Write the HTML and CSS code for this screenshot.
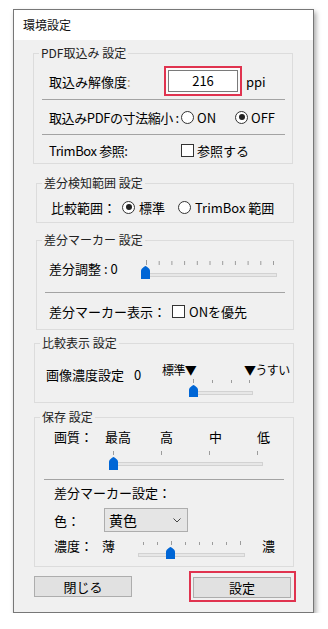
FILE: index.html
```html
<!DOCTYPE html>
<html lang="ja">
<head>
    <meta charset="UTF-8">
    <meta name="viewport" content="width=device-width, initial-scale=1.0">
    <title>環境設定</title>
    <link rel="stylesheet" href="styles.css">
</head>
<body>
<div class="window">
    <div class="titlebar">環境設定</div>

    <div class="content">
        <!-- PDF取込み -->
        <div class="group grp-pdf">
            <span class="caption">PDF取込み 設定</span>
            <div class="row row-res">
                <span class="lbl-res">取込み解像度<span class="colon">:</span></span>
                <span class="ring"><span class="textbox">216</span></span>
                <span class="unit">ppi</span>
            </div>
            <div class="sep sep-pdf"></div>
            <div class="row row-shrink">
                <span class="lbl-shrink">取込みPDFの寸法縮小 :</span>
                <span class="opt opt-on"><span class="radio"></span>ON</span>
                <span class="opt"><span class="radio checked"></span>OFF</span>
            </div>
            <div class="sep sep-pdf"></div>
            <div class="row row-trim">
                <span class="lbl-shrink">TrimBox 参照:</span>
                <span class="opt"><span class="check"></span>参照する</span>
            </div>
        </div>

        <!-- 差分検知範囲 -->
        <div class="group grp-range">
            <span class="caption">差分検知範囲 設定</span>
            <div class="row row-range">
                <span class="lbl-range">比較範囲：</span>
                <span class="opt opt-std"><span class="radio checked"></span>標準</span>
                <span class="opt"><span class="radio"></span>TrimBox 範囲</span>
            </div>
        </div>

        <!-- 差分マーカー -->
        <div class="group grp-marker">
            <span class="caption">差分マーカー 設定</span>
            <div class="row row-adj">
                <span class="lbl-adj">差分調整 : 0</span>
                <svg class="slider" width="137" height="21" viewBox="0 0 137 21">
                    <g stroke="#9c9c9c" stroke-width="1">
                        <line x1="5.5" y1="1" x2="5.5" y2="6"/>
                        <line x1="18.2" y1="2" x2="18.2" y2="6"/>
                        <line x1="30.9" y1="2" x2="30.9" y2="6"/>
                        <line x1="43.6" y1="2" x2="43.6" y2="6"/>
                        <line x1="56.3" y1="2" x2="56.3" y2="6"/>
                        <line x1="69" y1="2" x2="69" y2="6"/>
                        <line x1="81.7" y1="2" x2="81.7" y2="6"/>
                        <line x1="94.4" y1="2" x2="94.4" y2="6"/>
                        <line x1="107.1" y1="2" x2="107.1" y2="6"/>
                        <line x1="119.8" y1="2" x2="119.8" y2="6"/>
                        <line x1="132.5" y1="2" x2="132.5" y2="6"/>
                    </g>
                    <rect x="1.5" y="14.5" width="134" height="3" fill="#e7e7e7" stroke="#d2d2d2"/>
                    <path d="M0 20V11.5C0 10 3 7.5 4.5 7C6 7.5 9 10 9 11.5V20Z" fill="#0066d6"/>
                </svg>
            </div>
            <div class="sep sep-marker"></div>
            <div class="row row-mark">
                <span class="lbl-mark">差分マーカー表示：</span>
                <span class="opt opt-wide"><span class="check"></span>ONを優先</span>
            </div>
        </div>

        <!-- 比較表示 -->
        <div class="group grp-view">
            <span class="caption">比較表示 設定</span>
            <div class="row row-view">
                <span class="lbl-dens">画像濃度設定</span>
                <span class="zero">0</span>
                <div class="dens-slider">
                    <div class="marks"><span class="mark-std">標準▼</span><span>▼うすい</span></div>
                    <svg class="slider slider-b" width="66" height="20" viewBox="0 0 66 20">
                        <g stroke="#9c9c9c" stroke-width="1">
                            <line x1="4.5" y1="1" x2="4.5" y2="5"/>
                            <line x1="23.5" y1="2" x2="23.5" y2="5"/>
                            <line x1="42.5" y1="2" x2="42.5" y2="5"/>
                            <line x1="60.5" y1="2" x2="60.5" y2="5"/>
                        </g>
                        <rect x="1.5" y="13.5" width="62" height="3" fill="#e7e7e7" stroke="#d2d2d2"/>
                        <path d="M0 19V11.5C0 10 3 7.5 4.5 7C6 7.5 9 10 9 11.5V19Z" fill="#0066d6"/>
                    </svg>
                </div>
            </div>
        </div>

        <!-- 保存 -->
        <div class="group grp-save">
            <span class="caption">保存 設定</span>
            <div class="row row-quality">
                <span class="q-lbl">画質：</span>
                <span class="q-best">最高</span>
                <span class="q-high">高</span>
                <span class="q-mid">中</span>
                <span>低</span>
            </div>
            <svg class="slider slider-c" width="155" height="21" viewBox="0 0 155 21">
                <g stroke="#9c9c9c" stroke-width="1">
                    <line x1="4.5" y1="1" x2="4.5" y2="5"/>
                    <line x1="52.5" y1="1" x2="52.5" y2="5"/>
                    <line x1="100.5" y1="1" x2="100.5" y2="5"/>
                    <line x1="148.5" y1="1" x2="148.5" y2="5"/>
                </g>
                <rect x="0.5" y="12.5" width="153" height="3" fill="#e7e7e7" stroke="#d2d2d2"/>
                <path d="M0 20V11.5C0 10 3 7.5 4.5 7C6 7.5 9 10 9 11.5V20Z" fill="#0066d6"/>
            </svg>
            <div class="sep sep-save"></div>
            <div class="sub-title">差分マーカー設定：</div>
            <div class="row row-color">
                <span class="lbl-color">色：</span>
                <span class="select">黄色
                    <svg class="chev" width="8" height="5" viewBox="0 0 8 5"><path d="M0.5 0.5L4 4L7.5 0.5" fill="none" stroke="#444" stroke-width="1"/></svg>
                </span>
            </div>
            <div class="row row-dens">
                <span class="lbl-dens2">濃度：</span>
                <span class="lbl-thin">薄</span>
                <svg class="slider slider-d" width="108" height="19" viewBox="0 0 108 19">
                    <g stroke="#9c9c9c" stroke-width="1">
                        <line x1="5.5" y1="1" x2="5.5" y2="4"/>
                        <line x1="19.5" y1="1" x2="19.5" y2="4"/>
                        <line x1="33.5" y1="0" x2="33.5" y2="4"/>
                        <line x1="47.5" y1="1" x2="47.5" y2="4"/>
                        <line x1="61.5" y1="1" x2="61.5" y2="4"/>
                        <line x1="74.5" y1="1" x2="74.5" y2="4"/>
                        <line x1="88.5" y1="1" x2="88.5" y2="4"/>
                        <line x1="102.5" y1="0" x2="102.5" y2="4"/>
                    </g>
                    <rect x="0.5" y="12.5" width="106" height="3" fill="#e7e7e7" stroke="#d2d2d2"/>
                    <path d="M28 18V10.5C28 9 31 6.5 32.5 6C34 6.5 37 9 37 10.5V18Z" fill="#0066d6"/>
                </svg>
                <span class="lbl-thick">濃</span>
            </div>
        </div>

        <div class="buttons">
            <span class="btn">閉じる</span>
            <span class="btn-ring"><span class="btn">設定</span></span>
        </div>
    </div>
</div>
</body>
</html>
```

FILE: styles.css
```css
* {
    margin: 0;
    padding: 0;
    box-sizing: border-box;
}

body {
    background-color: #fff;
    font-family: "Noto Sans CJK JP", "Noto Sans", sans-serif;
    font-size: 13px;
    color: #000;
}

.window {
    width: 301px;
    margin: 9px 0 0 13px;
    border: 1px solid #777;
    background-color: #f0f0f0;
    box-shadow: 2px 3px 5px rgba(0, 0, 0, 0.35);
}

.titlebar {
    height: 30px;
    line-height: 30px;
    padding-left: 9px;
    background-color: #fff;
    font-size: 12px;
    color: #111;
}

.content {
    padding: 0 19px 10px 20px;
}

.group {
    position: relative;
    border: 1px solid #dcdcdc;
}

.caption {
    position: absolute;
    top: -8px;
    left: 5px;
    padding: 0 2px;
    background-color: #f0f0f0;
    font-size: 12px;
    line-height: 14px;
    color: #222;
    white-space: nowrap;
}

.row {
    display: flex;
    align-items: center;
    white-space: nowrap;
}

.row > span {
    flex-shrink: 0;
}

.sep {
    height: 1px;
    background-color: #a3a3a3;
}

.opt {
    display: flex;
    align-items: center;
    gap: 3px;
}

.radio {
    width: 13px;
    height: 13px;
    border: 1px solid #333;
    border-radius: 50%;
    background-color: #fff;
    display: inline-flex;
    align-items: center;
    justify-content: center;
}

.radio.checked::after {
    content: "";
    width: 6px;
    height: 6px;
    border-radius: 50%;
    background-color: #222;
}

.check {
    width: 13px;
    height: 13px;
    border: 1px solid #333;
    background-color: #fff;
}

.slider {
    display: block;
    flex-shrink: 0;
}

/* PDF取込み */
.grp-pdf {
    margin: 13px 1px 0 -1px;
}

.row-res {
    padding: 12px 0 3px 15px;
}

.lbl-res {
    width: 115px;
}

.colon {
    color: #b09060;
}

.ring {
    border: 2px solid #e0334f;
    padding: 2px;
    background-color: #fafafa;
}

.textbox {
    display: block;
    width: 70px;
    height: 22px;
    line-height: 20px;
    border: 1px solid #7a7a7a;
    background-color: #fff;
    text-align: center;
}

.unit {
    margin-left: 4px;
}

.sep-pdf {
    margin: 0 7px 0 8px;
}

.row-shrink {
    height: 34px;
    padding-left: 15px;
}

.lbl-shrink {
    width: 132px;
    letter-spacing: -0.4px;
}

.opt-on {
    width: 54px;
}

.row-trim {
    height: 28px;
    padding: 2px 0 0 15px;
}

/* 差分検知範囲 */
.grp-range {
    margin: 19px 0 0 2px;
}

.row-range {
    padding: 11px 0 3px 14px;
    height: 38px;
}

.lbl-range {
    width: 71px;
}

.opt-std {
    width: 56px;
}

.grp-range .opt {
    gap: 4px;
}

/* 差分マーカー */
.grp-marker {
    margin: 17px 0 0 2px;
}

.row-adj {
    height: 51px;
    padding: 15px 0 12px 12px;
}

.lbl-adj {
    width: 92px;
}

.row-adj .slider {
    align-self: flex-end;
}

.sep-marker {
    margin: 0 8px;
}

.row-mark {
    height: 36px;
    padding-left: 12px;
}

.lbl-mark {
    width: 123px;
}

.opt-wide {
    gap: 4px;
}

/* 比較表示 */
.grp-view {
    margin-top: 13px;
}

.row-view {
    align-items: flex-start;
    padding: 18px 0 4px 11px;
    line-height: 16px;
}

.lbl-dens {
    width: 88px;
    margin-top: 5px;
}

.zero {
    width: 28px;
    margin-top: 5px;
}

.dens-slider {
    flex-shrink: 0;
}

.marks {
    display: flex;
    white-space: nowrap;
    font-size: 12px;
    letter-spacing: -0.6px;
}

.mark-std {
    width: 82px;
}

.slider-b {
    margin-left: 27px;
}

/* 保存 */
.grp-save {
    margin-top: 14px;
}

.row-quality {
    padding: 11px 0 0 19px;
    line-height: 16px;
}

.q-lbl {
    width: 51px;
}

.q-best {
    width: 55px;
}

.q-high {
    width: 49px;
}

.q-mid {
    width: 48px;
}

.slider-c {
    margin: 5px 0 0 74px;
}

.sep-save {
    margin: 8px 9px 0 9px;
}

.sub-title {
    margin-top: 5px;
    padding-left: 19px;
    line-height: 16px;
}

.row-color {
    margin-top: 7px;
    padding-left: 19px;
}

.lbl-color {
    width: 50px;
}

.select {
    display: flex;
    align-items: center;
    justify-content: space-between;
    width: 84px;
    height: 24px;
    padding: 0 6px 0 4px;
    border: 1px solid #adadad;
    background-color: #e5e5e5;
    font-size: 14px;
}

.chev {
    display: block;
}

.row-dens {
    align-items: flex-start;
    margin-top: 6px;
    padding: 0 0 6px 19px;
    line-height: 16px;
}

.lbl-dens2 {
    width: 48px;
}

.lbl-thin {
    width: 36px;
}

.slider-d {
    margin-top: 3px;
}

.lbl-thick {
    margin-left: 16px;
}

/* ボタン */
.buttons {
    display: flex;
    justify-content: space-between;
    align-items: center;
    margin-top: 4px;
}

.btn {
    display: block;
    width: 98px;
    height: 21px;
    line-height: 19px;
    border: 1px solid #adadad;
    background-color: #e1e1e1;
    text-align: center;
}

.btn-ring {
    border: 2px solid #e0334f;
    padding: 4px 3px 2px 2px;
    margin-right: -2px;
}
```
